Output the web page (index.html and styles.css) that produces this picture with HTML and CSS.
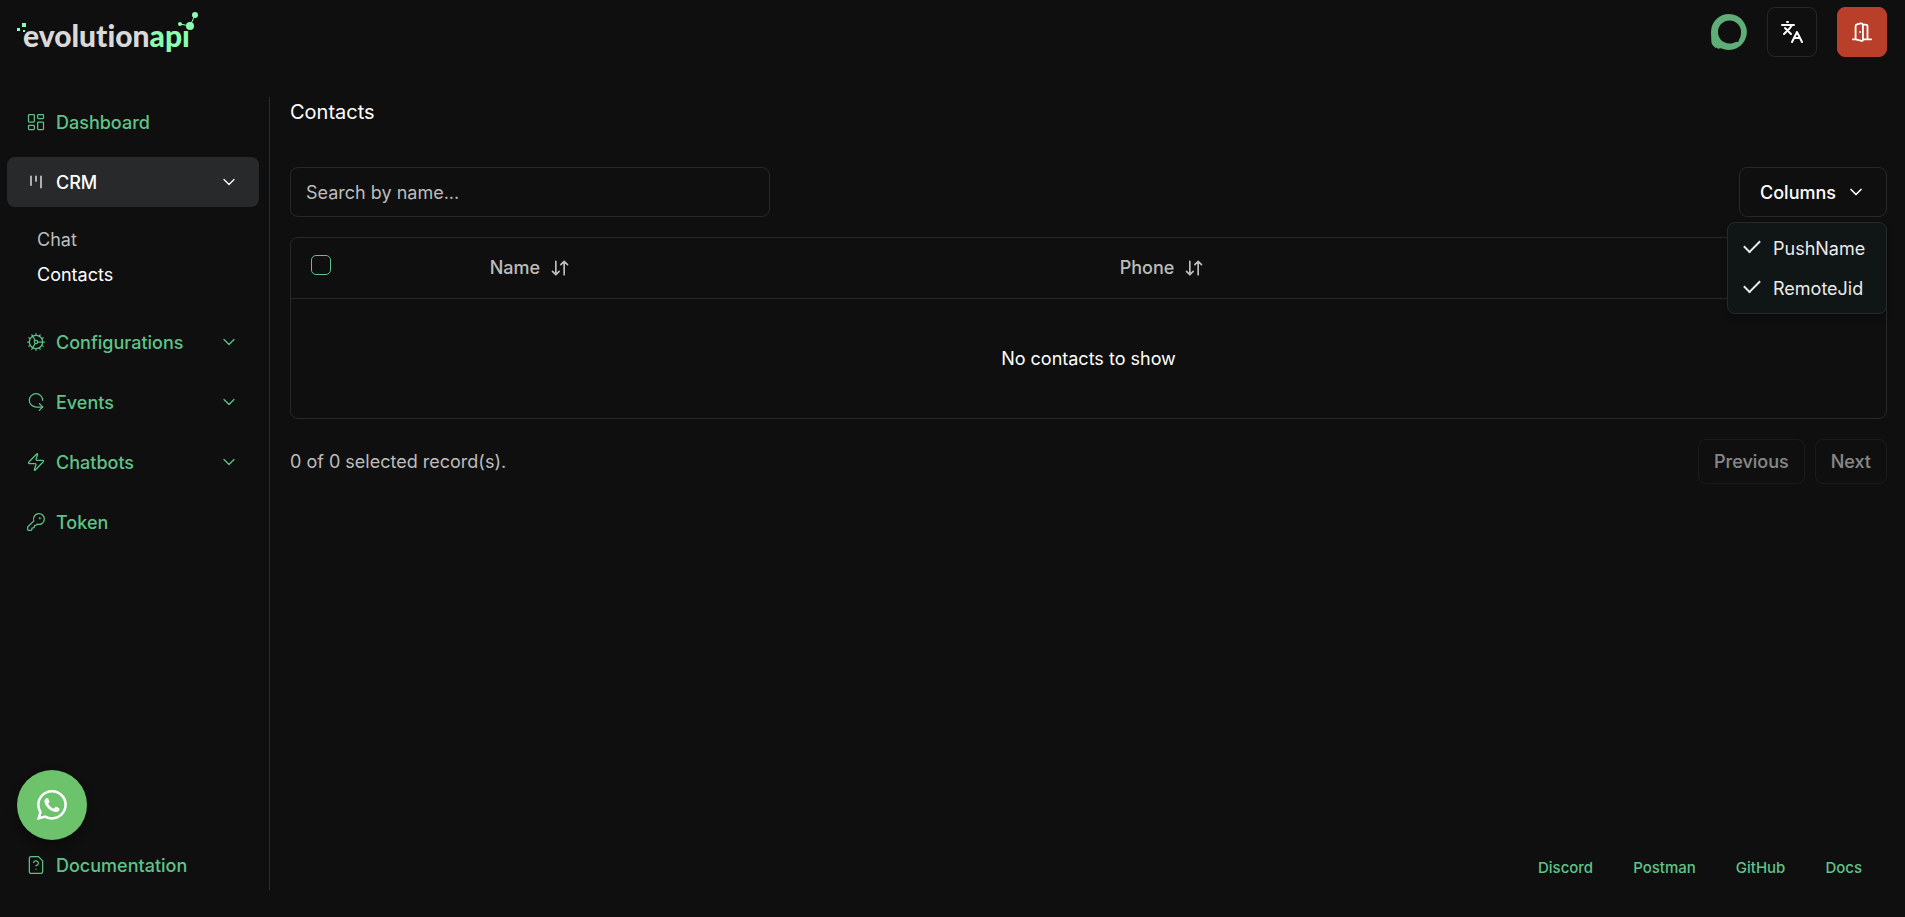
FILE: index.html
```html
<!DOCTYPE html>
<html lang="en">
<head>
  <meta charset="UTF-8">
  <meta name="viewport" content="width=device-width, initial-scale=1.0">
  <title>Evolution Manager</title>
  <link rel="stylesheet" href="styles.css">
</head>
<body>
  <header class="topbar">
    <a class="logo" href="#" aria-label="evolutionapi">
      <svg width="184" height="50" viewBox="0 0 184 50">
        <g fill="#8cfcb0">
          <rect x="3" y="21" width="3" height="3"/>
          <rect x="8" y="16" width="4" height="4"/>
          <rect x="9" y="23" width="2" height="2"/>
          <circle cx="166" cy="17" r="2"/>
          <circle cx="176" cy="19" r="4"/>
          <circle cx="181" cy="8" r="3"/>
        </g>
        <path d="M166 17l10 2 5-11" fill="none" stroke="#8cfcb0"/>
        <text class="logo-text" x="9" y="40">evolution<tspan class="logo-api">apı</tspan></text>
      </svg>
    </a>
    <div class="topbar-actions">
      <svg class="avatar" viewBox="0 0 36 36" aria-hidden="true">
        <path fill="#5fae78" fill-rule="evenodd" d="M18 0a18 18 0 1 1-8 34.200l-3 .5-1.500-1.200-1 .5-2.500-2.500c-1-1-1.700-2.500-1.700-5L0 18A18 18 0 0 1 18 0zM18.500 6.500A11.500 11.500 0 0 0 7 18c0 6.500 5 11.500 11.500 11.500 2.500 0 4-.3 6-1.500l3-.3 .5-2.200 1-1.500c.7-1.600 1-3.500 1-6A11.500 11.500 0 0 0 18.500 6.500z"/>
      </svg>
      <button class="icon-btn" aria-label="Language">
        <svg class="icon icon-lg" viewBox="0 0 24 24"><path d="m5 8 6 6M4 14l6-6 2-3M2 5h12M7 2h1M22 22l-5-10-5 10M14 18h6"/></svg>
      </button>
      <button class="icon-btn icon-btn-exit" aria-label="Log out">
        <svg class="icon icon-door" viewBox="0 0 24 24"><path d="M13 4h3a2 2 0 0 1 2 2v14M2 20h3M13 20h9M10 12v.01M13 4.562v16.157a1 1 0 0 1-1.242.97L5 20V5.562a2 2 0 0 1 1.515-1.940l4-1A2 2 0 0 1 13 4.561Z"/></svg>
      </button>
    </div>
  </header>

  <div class="layout">
    <nav class="sidebar">
      <a class="nav-item" href="#">
        <svg class="icon" viewBox="0 0 24 24"><rect width="7" height="9" x="3" y="3" rx="1"/><rect width="7" height="5" x="14" y="3" rx="1"/><rect width="7" height="9" x="14" y="12" rx="1"/><rect width="7" height="5" x="3" y="16" rx="1"/></svg>
        <span>Dashboard</span>
      </a>
      <div class="nav-group">
        <button class="nav-item active">
          <svg class="icon" viewBox="0 0 24 24"><path d="M6 5v11M12 5v6M18 5v14"/></svg>
          <span>CRM</span>
          <svg class="icon chevron" viewBox="0 0 24 24"><path d="m6 9 6 6 6-6"/></svg>
        </button>
        <div class="subnav">
          <a class="subnav-item" href="#">Chat</a>
          <a class="subnav-item current" href="#">Contacts</a>
        </div>
      </div>
      <button class="nav-item">
        <svg class="icon" viewBox="0 0 24 24"><path d="M12 20a8 8 0 1 0 0-16 8 8 0 0 0 0 16ZM12 14a2 2 0 1 0 0-4 2 2 0 0 0 0 4ZM12 2v2M12 22v-2M17 20.660l-1-1.730M11 10.270 7 3.340M20.660 17l-1.730-1M3.340 7l1.730 1M14 12h8M2 12h2M20.660 7l-1.730 1M3.340 17l1.730-1M17 3.340l-1 1.730M11 13.730l-4 6.930"/></svg>
        <span>Configurations</span>
        <svg class="icon chevron" viewBox="0 0 24 24"><path d="m6 9 6 6 6-6"/></svg>
      </button>
      <button class="nav-item">
        <svg class="icon" viewBox="0 0 24 24"><path d="M20 10c0-4.400-3.600-8-8-8s-8 3.600-8 8 3.600 8 8 8h8"/><path d="m16 14 4 4-4 4"/></svg>
        <span>Events</span>
        <svg class="icon chevron" viewBox="0 0 24 24"><path d="m6 9 6 6 6-6"/></svg>
      </button>
      <button class="nav-item">
        <svg class="icon" viewBox="0 0 24 24"><path d="M4 14a1 1 0 0 1-.78-1.630l9.900-10.200a.5.5 0 0 1 .86.460l-1.920 6.020A1 1 0 0 0 13 10h7a1 1 0 0 1 .78 1.630l-9.900 10.200a.5.5 0 0 1-.86-.460l1.920-6.020A1 1 0 0 0 11 14z"/></svg>
        <span>Chatbots</span>
        <svg class="icon chevron" viewBox="0 0 24 24"><path d="m6 9 6 6 6-6"/></svg>
      </button>
      <a class="nav-item" href="#">
        <svg class="icon" viewBox="0 0 24 24"><path d="M2.586 17.414A2 2 0 0 0 2 18.828V21a1 1 0 0 0 1 1h3a1 1 0 0 0 1-1v-1a1 1 0 0 1 1-1h1a1 1 0 0 0 1-1v-1a1 1 0 0 1 1-1h.172a2 2 0 0 0 1.414-.586l.814-.814a6.500 6.500 0 1 0-4-4z"/><circle cx="16.500" cy="7.500" r=".5"/></svg>
        <span>Token</span>
      </a>
      <a class="nav-item nav-docs" href="#">
        <svg class="icon" viewBox="0 0 24 24"><path d="M15 2H6a2 2 0 0 0-2 2v16a2 2 0 0 0 2 2h12a2 2 0 0 0 2-2V7zM12 17h.01M9.100 9a3 3 0 0 1 5.820 1c0 2-3 3-3 3"/></svg>
        <span>Documentation</span>
      </a>
    </nav>

    <main class="content">
      <h1>Contacts</h1>
      <div class="toolbar">
        <input class="search" type="text" placeholder="Search by name..." aria-label="Search by name">
        <div class="dropdown">
          <button class="btn btn-columns">
            Columns
            <svg class="icon icon-bold" viewBox="0 0 24 24"><path d="m6 9 6 6 6-6"/></svg>
          </button>
          <div class="menu">
            <label class="menu-item"><input type="checkbox" checked>PushName</label>
            <label class="menu-item"><input type="checkbox" checked>RemoteJid</label>
          </div>
        </div>
      </div>

      <div class="table-wrap">
        <table>
          <thead>
            <tr>
              <th class="col-check"><input class="checkbox" type="checkbox" aria-label="Select all"></th>
              <th class="col-name">
                <button class="sort">Name <svg class="icon icon-bold" viewBox="0 0 24 24"><path d="m3 16 4 4 4-4M7 20V4M21 8l-4-4-4 4M17 4v16"/></svg></button>
              </th>
              <th>
                <button class="sort">Phone <svg class="icon icon-bold" viewBox="0 0 24 24"><path d="m3 16 4 4 4-4M7 20V4M21 8l-4-4-4 4M17 4v16"/></svg></button>
              </th>
            </tr>
          </thead>
          <tbody>
            <tr>
              <td class="empty" colspan="3">No contacts to show</td>
            </tr>
          </tbody>
        </table>
      </div>

      <div class="pagination">
        <span class="selected-count">0 of 0 selected record(s).</span>
        <button class="btn btn-page" disabled>Previous</button>
        <button class="btn btn-page" disabled>Next</button>
      </div>

      <footer class="links">
        <a href="#">Discord</a>
        <a href="#">Postman</a>
        <a href="#">GitHub</a>
        <a href="#">Docs</a>
      </footer>
    </main>
  </div>

  <a class="whatsapp" href="#" aria-label="WhatsApp">
    <svg width="30" height="30" viewBox="0 0 16 16" fill="#fff"><path d="M13.601 2.326A7.850 7.850 0 0 0 7.994 0C3.627 0 .068 3.558.064 7.926c0 1.399.366 2.760 1.057 3.965L0 16l4.204-1.102a7.900 7.900 0 0 0 3.790.965h.004c4.368 0 7.926-3.558 7.930-7.930A7.900 7.900 0 0 0 13.600 2.326zM7.994 14.521a6.600 6.600 0 0 1-3.356-.920l-.240-.144-2.494.654.666-2.433-.156-.251a6.560 6.560 0 0 1-1.007-3.505c0-3.626 2.957-6.584 6.591-6.584a6.560 6.560 0 0 1 4.660 1.931 6.560 6.560 0 0 1 1.928 4.660c-.004 3.639-2.961 6.592-6.592 6.592m3.615-4.934c-.197-.099-1.170-.578-1.353-.646-.182-.065-.315-.099-.445.099-.133.197-.513.646-.627.775-.114.133-.232.148-.430.050-.197-.100-.836-.308-1.592-.985-.590-.525-.985-1.175-1.103-1.372-.114-.198-.011-.304.088-.403.087-.088.197-.232.296-.346.100-.114.133-.198.198-.330.065-.134.034-.248-.015-.347-.050-.099-.445-1.076-.612-1.470-.160-.389-.323-.335-.445-.340-.114-.007-.247-.007-.380-.007a.73.73 0 0 0-.529.247c-.182.198-.691.677-.691 1.654s.710 1.916.810 2.049c.098.133 1.394 2.132 3.383 2.992.470.205.840.326 1.129.418.475.152.904.129 1.246.080.380-.058 1.171-.480 1.338-.943.164-.464.164-.860.114-.943-.049-.084-.182-.133-.380-.232"/></svg>
  </a>
</body>
</html>
```
FILE: styles.css
```css
* {
  box-sizing: border-box;
}
body {
  margin: 0;
  min-height: 100vh;
  display: flex;
  flex-direction: column;
  background-color: #0f0f0f;
  color: #fff;
  font-family: Inter, sans-serif;
  font-size: 18px;
  line-height: 25px;
}
button, input {
  font: inherit;
  color: inherit;
}
button {
  cursor: pointer;
}
a {
  color: inherit;
  text-decoration: none;
}

.icon {
  width: 20px;
  height: 20px;
  flex-shrink: 0;
  fill: none;
  stroke: currentColor;
  stroke-width: 1.5;
  stroke-linecap: round;
  stroke-linejoin: round;
}
.icon-bold {
  stroke-width: 2;
}
.icon-lg {
  width: 24px;
  height: 24px;
  stroke-width: 2;
}
.icon-door {
  width: 22px;
  height: 22px;
  stroke-width: 2;
}

/* top bar */
.topbar {
  display: flex;
  align-items: center;
  justify-content: space-between;
  padding: 7px 18px 7px 14px;
}
.logo svg {
  display: block;
}
.logo-text {
  font-family: Lato, sans-serif;
  font-size: 30px;
  font-weight: 900;
  font-variant-ligatures: none;
  fill: #d9d9d9;
}
.logo-api {
  fill: #8cfcb0;
}
.topbar-actions {
  display: flex;
  align-items: center;
  gap: 20px;
}
.avatar {
  width: 36px;
  height: 36px;
}
.icon-btn {
  display: flex;
  align-items: center;
  justify-content: center;
  width: 50px;
  height: 50px;
  padding: 0;
  background: none;
  border: 1px solid #282828;
  border-radius: 8px;
}
.icon-btn-exit {
  background-color: #b93f2a;
  border-color: #b93f2a;
}

.layout {
  flex: 1;
  display: flex;
  margin: 33px 18px 27px 0;
}

/* sidebar */
.sidebar {
  width: 270px;
  display: flex;
  flex-direction: column;
  gap: 10px;
  padding: 0 10px 0 7px;
  border-right: 1px solid #2d2d2d;
}
.nav-item {
  display: flex;
  align-items: center;
  gap: 10px;
  width: 100%;
  height: 50px;
  padding: 0 20px 0 19px;
  background: none;
  border: none;
  border-radius: 8px;
  color: #5fc389;
  font-weight: 500;
  text-align: left;
}
.nav-item.active {
  background-color: #28292b;
  color: #fff;
}
.chevron {
  margin-left: auto;
}
.subnav {
  display: flex;
  flex-direction: column;
  gap: 10px;
  padding: 20px 30px;
}
.subnav-item {
  color: #bdbdbd;
}
.subnav-item.current {
  color: #fff;
}
.nav-docs {
  margin-top: auto;
}

/* contacts */
.content {
  flex: 1;
  min-width: 0;
  display: flex;
  flex-direction: column;
  padding-left: 20px;
}
h1 {
  margin: 0 0 40px;
  font-size: 20px;
  line-height: 30px;
  font-weight: 400;
}
.toolbar {
  display: flex;
  align-items: center;
  justify-content: space-between;
  margin-bottom: 20px;
}
.search {
  width: 480px;
  height: 50px;
  padding: 0 15px;
  background: none;
  border: 1px solid #282828;
  border-radius: 8px;
}
.search::placeholder {
  color: #bdbdbd;
}
.btn {
  display: flex;
  align-items: center;
  background: none;
  border: 1px solid #282828;
  border-radius: 8px;
  font-weight: 500;
}
.btn-columns {
  gap: 10px;
  height: 50px;
  padding: 0 20px;
}
.dropdown {
  position: relative;
}
.menu {
  position: absolute;
  top: 55px;
  right: 0;
  width: 160px;
  padding: 5px;
  background-color: #101515;
  border: 1px solid #282a2a;
  border-radius: 8px;
  box-shadow: 0 4px 6px rgba(0,0,0,0.2);
}
.menu-item {
  display: flex;
  align-items: center;
  gap: 13px;
  height: 40px;
  padding-left: 11px;
  color: #ebebeb;
}
.menu-item input {
  appearance: none;
  display: flex;
  justify-content: center;
  width: 16px;
  height: 16px;
  margin: 0;
}
.menu-item input:checked::before {
  content: "";
  width: 14px;
  height: 7px;
  border-left: 2px solid;
  border-bottom: 2px solid;
  transform: rotate(-45deg);
}

.table-wrap {
  border: 1px solid #282828;
  border-radius: 8px;
}
table {
  width: 100%;
  border-collapse: collapse;
  table-layout: fixed;
}
th {
  height: 60px;
  padding: 0 20px;
  border-bottom: 1px solid #282828;
  text-align: left;
}
.col-check {
  width: 11.2%;
}
.col-name {
  width: 39.5%;
}
.checkbox {
  appearance: none;
  display: block;
  width: 20px;
  height: 20px;
  margin: 0 0 5px;
  border: 1px solid #5fc389;
  border-radius: 5px;
}
.sort {
  display: flex;
  align-items: center;
  gap: 10px;
  padding: 0;
  background: none;
  border: none;
  color: #bdbdbd;
  font-weight: 500;
}
.empty {
  height: 120px;
  padding: 0;
  text-align: center;
}

.pagination {
  display: flex;
  align-items: center;
  gap: 10px;
  margin-top: 20px;
}
.selected-count {
  flex: 1;
  color: #bdbdbd;
}
.btn-page {
  height: 45px;
  padding: 0 15px;
}
.btn-page:disabled {
  opacity: 0.5;
}

.links {
  display: flex;
  justify-content: flex-end;
  gap: 40px;
  margin-top: auto;
  padding: 0 25px 10px 0;
  color: #5fc389;
  font-size: 15px;
  font-weight: 500;
}

.whatsapp {
  position: fixed;
  left: 17px;
  bottom: 77px;
  display: flex;
  align-items: center;
  justify-content: center;
  width: 70px;
  height: 70px;
  background-color: #6cc36c;
  border-radius: 50%;
  box-shadow: 0 4px 10px rgba(0,0,0,0.4);
}
```
